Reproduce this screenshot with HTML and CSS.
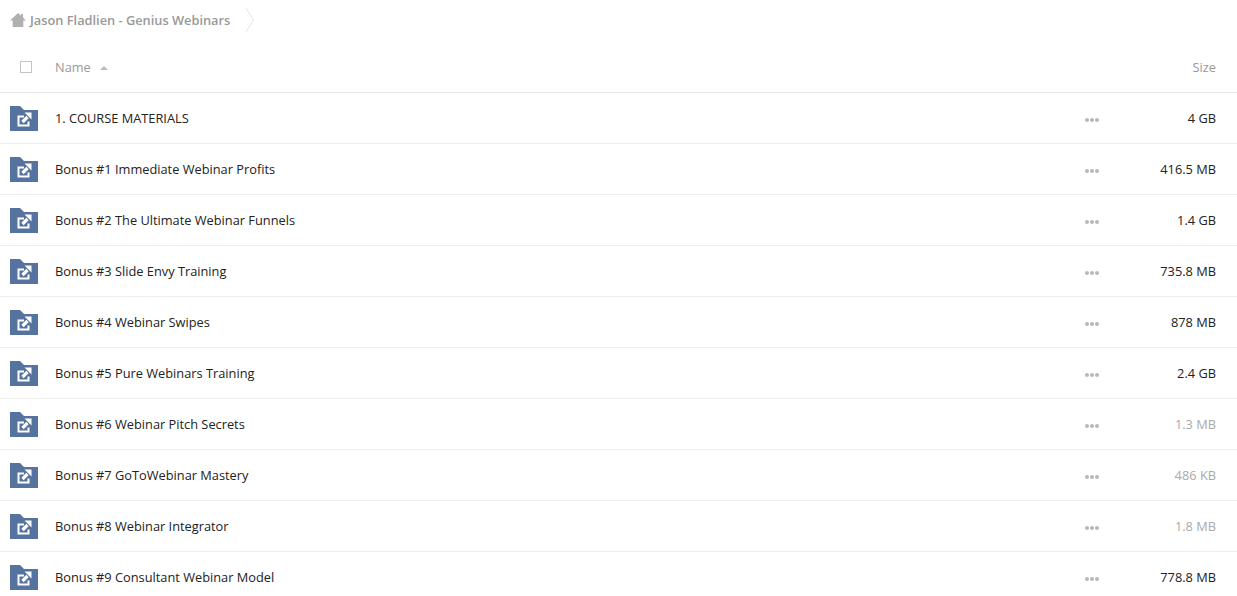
FILE: index.html
```html
<!DOCTYPE html>
<html lang="en">
<head>
    <meta charset="UTF-8">
    <title>Jason Fladlien - Genius Webinars</title>
    <link rel="stylesheet" href="styles.css">
</head>
<body>
    <svg class="defs" width="0" height="0">
        <symbol id="folder-link" viewBox="0 0 28 25">
            <path d="M0 0H10l4 4H28V25H0z" fill="#56739f"/>
            <path d="M14 10.500H8.500v9h10v-4" fill="none" stroke="#fff" stroke-width="2"/>
            <path d="M12.500 16l5-5" fill="none" stroke="#fff" stroke-width="3.200"/>
            <path d="M14.500 6.500h7v7z" fill="#fff"/>
        </symbol>
    </svg>

    <nav class="crumbs">
        <svg class="home" width="16" height="14" viewBox="0 0 16 14"><path d="M8 0l3 2.700V1h2v3.500L16 7.500h-2.700V14H2.700V7.500H0z" fill="#b0b0b0"/></svg>
        <span class="crumb-name">Jason Fladlien - Genius Webinars</span>
        <svg class="crumb-arrow" width="10" height="26" viewBox="0 0 10 26"><path d="M1 1l7.500 12L1 25" fill="none" stroke="#e4e4e4"/></svg>
    </nav>

    <div class="head-row">
        <span class="check"></span>
        <span class="head-name">Name <i class="sort"></i></span>
        <span class="head-size">Size</span>
    </div>

    <ul class="files">
        <li class="file">
            <svg class="folder"><use href="#folder-link"/></svg>
            <span class="file-name">1. COURSE MATERIALS</span>
            <span class="dots"><i></i><i></i><i></i></span>
            <span class="file-size">4 GB</span>
        </li>
        <li class="file">
            <svg class="folder"><use href="#folder-link"/></svg>
            <span class="file-name">Bonus #1 Immediate Webinar Profits</span>
            <span class="dots"><i></i><i></i><i></i></span>
            <span class="file-size">416.5 MB</span>
        </li>
        <li class="file">
            <svg class="folder"><use href="#folder-link"/></svg>
            <span class="file-name">Bonus #2 The Ultimate Webinar Funnels</span>
            <span class="dots"><i></i><i></i><i></i></span>
            <span class="file-size">1.4 GB</span>
        </li>
        <li class="file">
            <svg class="folder"><use href="#folder-link"/></svg>
            <span class="file-name">Bonus #3 Slide Envy Training</span>
            <span class="dots"><i></i><i></i><i></i></span>
            <span class="file-size">735.8 MB</span>
        </li>
        <li class="file">
            <svg class="folder"><use href="#folder-link"/></svg>
            <span class="file-name">Bonus #4 Webinar Swipes</span>
            <span class="dots"><i></i><i></i><i></i></span>
            <span class="file-size">878 MB</span>
        </li>
        <li class="file">
            <svg class="folder"><use href="#folder-link"/></svg>
            <span class="file-name">Bonus #5 Pure Webinars Training</span>
            <span class="dots"><i></i><i></i><i></i></span>
            <span class="file-size">2.4 GB</span>
        </li>
        <li class="file">
            <svg class="folder"><use href="#folder-link"/></svg>
            <span class="file-name">Bonus #6 Webinar Pitch Secrets</span>
            <span class="dots"><i></i><i></i><i></i></span>
            <span class="file-size small">1.3 MB</span>
        </li>
        <li class="file">
            <svg class="folder"><use href="#folder-link"/></svg>
            <span class="file-name">Bonus #7 GoToWebinar Mastery</span>
            <span class="dots"><i></i><i></i><i></i></span>
            <span class="file-size small">486 KB</span>
        </li>
        <li class="file">
            <svg class="folder"><use href="#folder-link"/></svg>
            <span class="file-name">Bonus #8 Webinar Integrator</span>
            <span class="dots"><i></i><i></i><i></i></span>
            <span class="file-size small">1.8 MB</span>
        </li>
        <li class="file">
            <svg class="folder"><use href="#folder-link"/></svg>
            <span class="file-name">Bonus #9 Consultant Webinar Model</span>
            <span class="dots"><i></i><i></i><i></i></span>
            <span class="file-size">778.8 MB</span>
        </li>
    </ul>
</body>
</html>
```

FILE: styles.css
```css
html, body {
    height: 596px;
    overflow: hidden;
}

body {
    margin: 0;
    font-family: "Open Sans", sans-serif;
    font-size: 13px;
    color: #222;
    background: #fff;
}

.defs {
    display: block;
    height: 0;
}

/* Breadcrumb */
.crumbs {
    display: flex;
    align-items: center;
    height: 42px;
    padding: 0 0 2px 10px;
    box-sizing: border-box;
}

.crumb-name {
    margin-left: 4px;
    font-weight: 600;
    font-size: 12.8px;
    color: #999;
}

.crumb-arrow {
    margin-left: 15px;
}

/* Table header */
.head-row {
    display: flex;
    align-items: center;
    height: 51px;
    padding: 0 21px 0 20px;
    box-sizing: border-box;
    border-bottom: 1px solid #e8e8e8;
    color: #999;
    font-size: 12.8px;
}

.check {
    width: 10px;
    height: 10px;
    border: 1px solid #c4c4c4;
}

.head-name {
    margin-left: 23px;
    flex: 1;
}

.sort {
    display: inline-block;
    margin: 0 0 2px 6px;
    border-left: 4px solid transparent;
    border-right: 4px solid transparent;
    border-bottom: 4px solid #bbb;
}

/* Rows */
.files {
    list-style: none;
    margin: 0;
    padding: 0;
}

.file {
    display: flex;
    align-items: center;
    height: 51px;
    padding: 0 21px 0 10px;
    box-sizing: border-box;
    border-bottom: 1px solid #eee;
    font-size: 12.8px;
}

.folder {
    width: 28px;
    height: 25px;
    margin-top: 1px;
}

.file-name {
    flex: 1;
    margin-left: 17px;
}

.dots {
    display: flex;
    gap: 1px;
    margin-top: 4px;
    margin-right: 1px;
}

.dots i {
    width: 4px;
    height: 4px;
    border-radius: 50%;
    background: #b8b8b8;
}

.file-size {
    width: 116px;
    text-align: right;
}

.file-size.small {
    color: #aaa;
}
```
